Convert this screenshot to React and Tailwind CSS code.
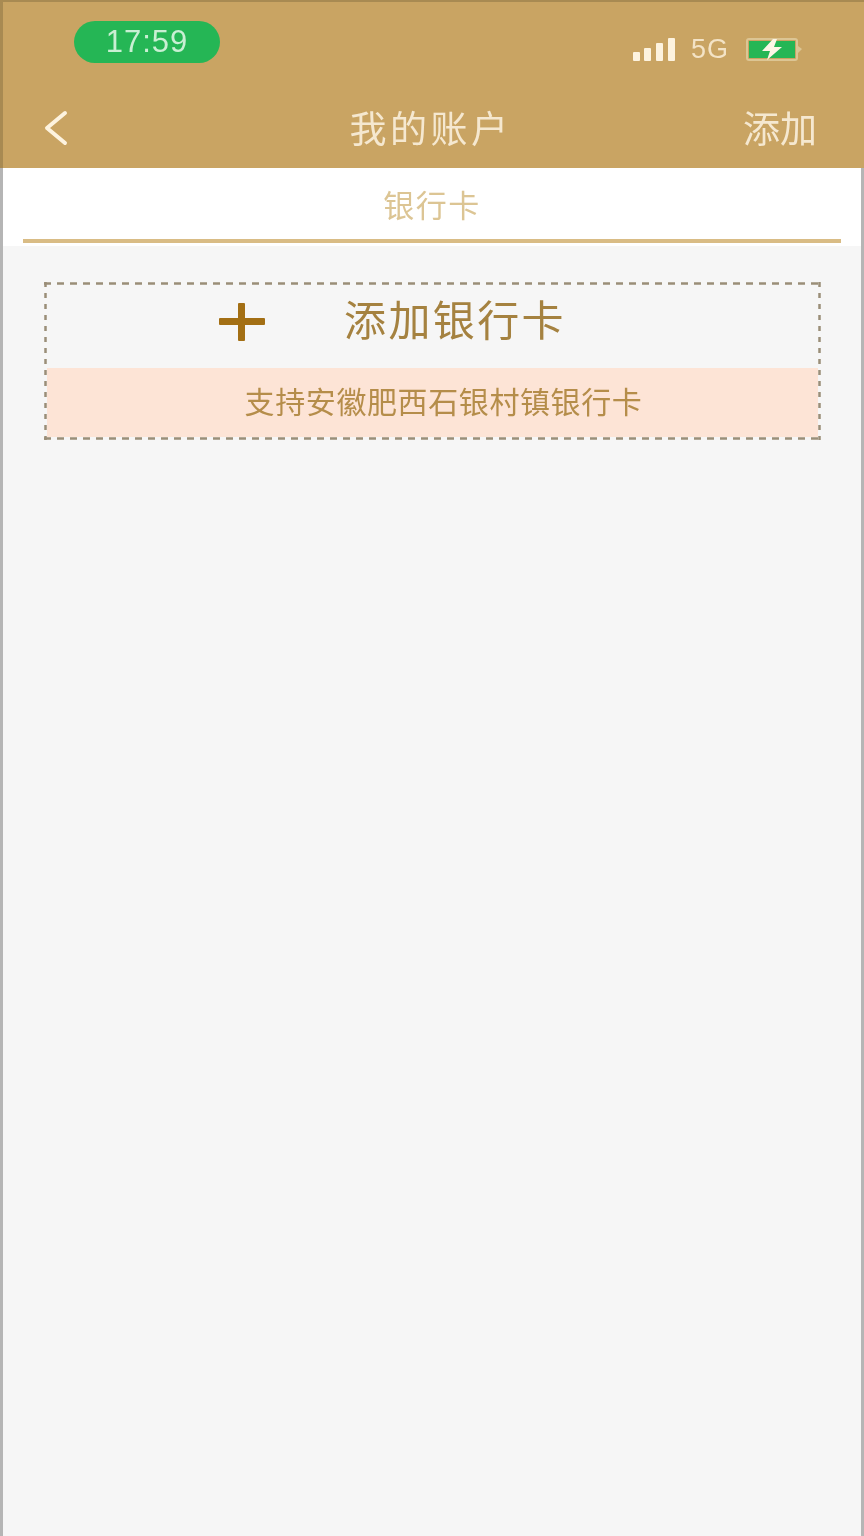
const cjk = "font-['Noto_Sans_CJK_SC','Noto_Sans',sans-serif]"

function StatusBar() {
  return (
    <div className="flex h-[82px] items-start justify-between pl-[71px] pr-[58px] pt-[19px]">
      <div className="flex h-[42px] w-[146px] items-center justify-center rounded-full bg-[#25b655] font-['Liberation_Sans',sans-serif] text-[31px] tracking-[1px] text-[#c9efd3]">
        17:59
      </div>
      <div className="flex items-center pt-[15px]">
        <svg width="44" height="24" viewBox="0 0 44 24" fill="#fdf3df">
          <rect x="0" y="14" width="7" height="9" rx="1" />
          <rect x="11" y="10" width="7" height="13" rx="1" />
          <rect x="23" y="5" width="7" height="18" rx="1" />
          <rect x="35" y="0" width="7" height="23" rx="1" />
        </svg>
        <span className="ml-[14px] font-['Liberation_Sans',sans-serif] text-[27px] leading-none tracking-[1px] text-[#f3e3c6]">5G</span>
        <svg className="ml-[17px]" width="60" height="26" viewBox="0 0 60 26">
          <rect x="1" y="2" width="50" height="21" rx="2" fill="none" stroke="#dcc594" strokeWidth="2" />
          <rect x="3" y="4" width="46" height="17" fill="#25b655" />
          <path d="M52 9 L56 12 L52 16 Z" fill="#dcc594" />
          <path d="M27 2 L16 14 H24 L21 23 L36 10 H28 L31 2 Z" fill="#fdf6e6" />
        </svg>
      </div>
    </div>
  )
}

// the dashes run longer along the top and bottom than down the sides
function DashedFrame() {
  return (
    <svg className="pointer-events-none absolute inset-0" width="777" height="158" fill="none" stroke="#9a8e78" strokeWidth="2.5">
      <path d="M0 1.5 H777 M0 156.5 H777" strokeDasharray="7 6" />
      <path d="M1.5 0 V158 M775.5 0 V158" strokeDasharray="5 6" />
    </svg>
  )
}

export default function App() {
  return (
    <div className={`${cjk} h-[1536px] w-[864px] border-x-[3px] border-x-[#b5b5b5] bg-[#f6f6f6]`}>
      <header className="-mx-[3px] h-[168px] border-t-[2px] border-l-[3px] border-t-[#a88a52] border-l-[#a88a52] bg-[#c9a463] blur-[0.6px]">
        <StatusBar />
        <nav className="grid h-[84px] grid-cols-[1fr_auto_1fr] items-center pl-[41px] pr-[47px] pt-[4px]">
          <svg width="26" height="36" viewBox="0 0 26 36" fill="none" stroke="#fdf3df" strokeWidth="4" strokeLinecap="round" strokeLinejoin="round">
            <path d="M21 3 L3 18 L21 33" />
          </svg>
          <h1 className="text-[37px] font-normal tracking-[3.5px] text-[#f5e8d0]">我的账户</h1>
          <span className="justify-self-end text-[37px] text-[#f5e8d0]">添加</span>
        </nav>
      </header>

      <div className="flex h-[78px] justify-center bg-white blur-[0.6px]">
        <div className="mb-[3px] flex w-[818px] justify-center border-b-[4px] border-b-[#d9bc85] pt-[14px]">
          <span className="text-[31px] leading-[44px] tracking-[1.5px] text-[#dcc594]">银行卡</span>
        </div>
      </div>

      <main className="px-[41px] pt-[36px] blur-[0.6px]">
        <div className="relative h-[158px] w-[777px]">
          <div className="flex h-[86px] items-center pb-[4px] pl-[174px]">
            <svg width="48" height="40" viewBox="0 0 48 40" fill="#a36f14">
              <rect x="1" y="15" width="46" height="7" rx="1" />
              <rect x="20" y="0" width="7" height="38" rx="1" />
            </svg>
            <span className="mb-[10px] ml-[78px] text-[42px] leading-[50px] tracking-[2.4px] text-[#a58240]">添加银行卡</span>
          </div>
          <div className="mx-[3px] flex h-[69px] items-center justify-center bg-[#fde4d6] pb-[6px] pl-[22px]">
            <span className="text-[30px] leading-[40px] tracking-[0.6px] text-[#b58d4a]">支持安徽肥西石银村镇银行卡</span>
          </div>
          <DashedFrame />
        </div>
      </main>
    </div>
  )
}
